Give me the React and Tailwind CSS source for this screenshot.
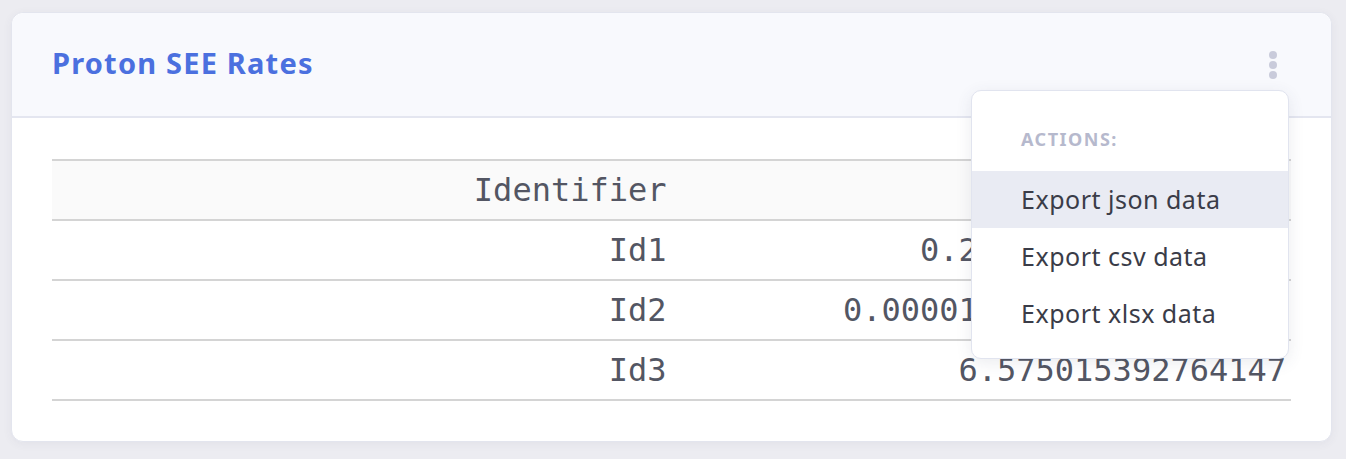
import { useState } from 'react';

const rows = [
  { id: 'Id1', value: '0.21473196548312307' },
  { id: 'Id2', value: '0.000013249871029467152' },
  { id: 'Id3', value: '6.575015392764147' },
];

const actions = ['Export json data', 'Export csv data', 'Export xlsx data'];

const KebabIcon = () => (
  <svg width="10" height="30" viewBox="0 0 10 30" fill="#c9cbdb">
    <circle cx="5" cy="5" r="4" />
    <circle cx="5" cy="15" r="4" />
    <circle cx="5" cy="25" r="4" />
  </svg>
);

const ActionsMenu = ({ active, onHover }) => (
  <div className="absolute left-[959px] top-[77px] w-[318px] rounded-[10px] border border-[#e1e4ef] bg-white pt-[16px] pb-[16px] shadow-[0_4px_16px_rgba(60,64,100,0.10)]">
    <div className="flex h-[64px] items-center px-[49px] text-[18px] font-bold tracking-[1.5px] text-[#b6b9cd]">
      ACTIONS:
    </div>
    {actions.map((label, i) => (
      <div
        key={label}
        onMouseEnter={() => onHover(i)}
        className={`flex h-[57px] items-center px-[49px] text-[25px] tracking-[0.5px] text-[#3a3c48] ${
          active === i ? 'bg-[#e9ebf3]' : ''
        }`}
      >
        {label}
      </div>
    ))}
  </div>
);

export default function App() {
  const [active, setActive] = useState(0);

  return (
    <div
      className="min-h-[459px] bg-[#ececf1] pl-[11px] pr-[14px] pt-[12px] pb-[19px]"
      style={{ fontFamily: '"Noto Sans", "Open Sans", sans-serif' }}
    >
      <div className="relative rounded-[12px] border border-[#e3e5ee] bg-white shadow-[0_2px_10px_rgba(60,64,100,0.06)]">
        {/* card header */}
        <div className="flex h-[105px] items-center justify-between rounded-t-[12px] border-b-2 border-[#e4e6f0] bg-[#f8f9fd] pl-[40px] pr-[53px]">
          <h2 className="-mt-[3px] text-[29px] font-bold tracking-[1.2px] text-[#4b70df]">Proton SEE Rates</h2>
          <KebabIcon />
        </div>

        {/* card body */}
        <div className="px-[40px] pt-[41px] pb-[40px]">
          <table
            className="w-full border-collapse text-[32px] text-[#535663]"
            style={{ fontFamily: '"DejaVu Sans Mono", monospace' }}
          >
            <thead>
              <tr className="h-[60px] border-y-2 border-[#d4d4d4] bg-[#fafafa]">
                <th className="w-1/2 pr-[5px] text-right font-normal">Identifier</th>
                <th className="w-1/2 pr-[5px] text-right font-normal">Rate</th>
              </tr>
            </thead>
            <tbody>
              {rows.map((row) => (
                <tr key={row.id} className="h-[60px] border-b-2 border-[#d4d4d4]">
                  <td className="pr-[5px] text-right">{row.id}</td>
                  <td className="pr-[5px] text-right">{row.value}</td>
                </tr>
              ))}
            </tbody>
          </table>
        </div>

        <ActionsMenu active={active} onHover={setActive} />
      </div>
    </div>
  );
}
